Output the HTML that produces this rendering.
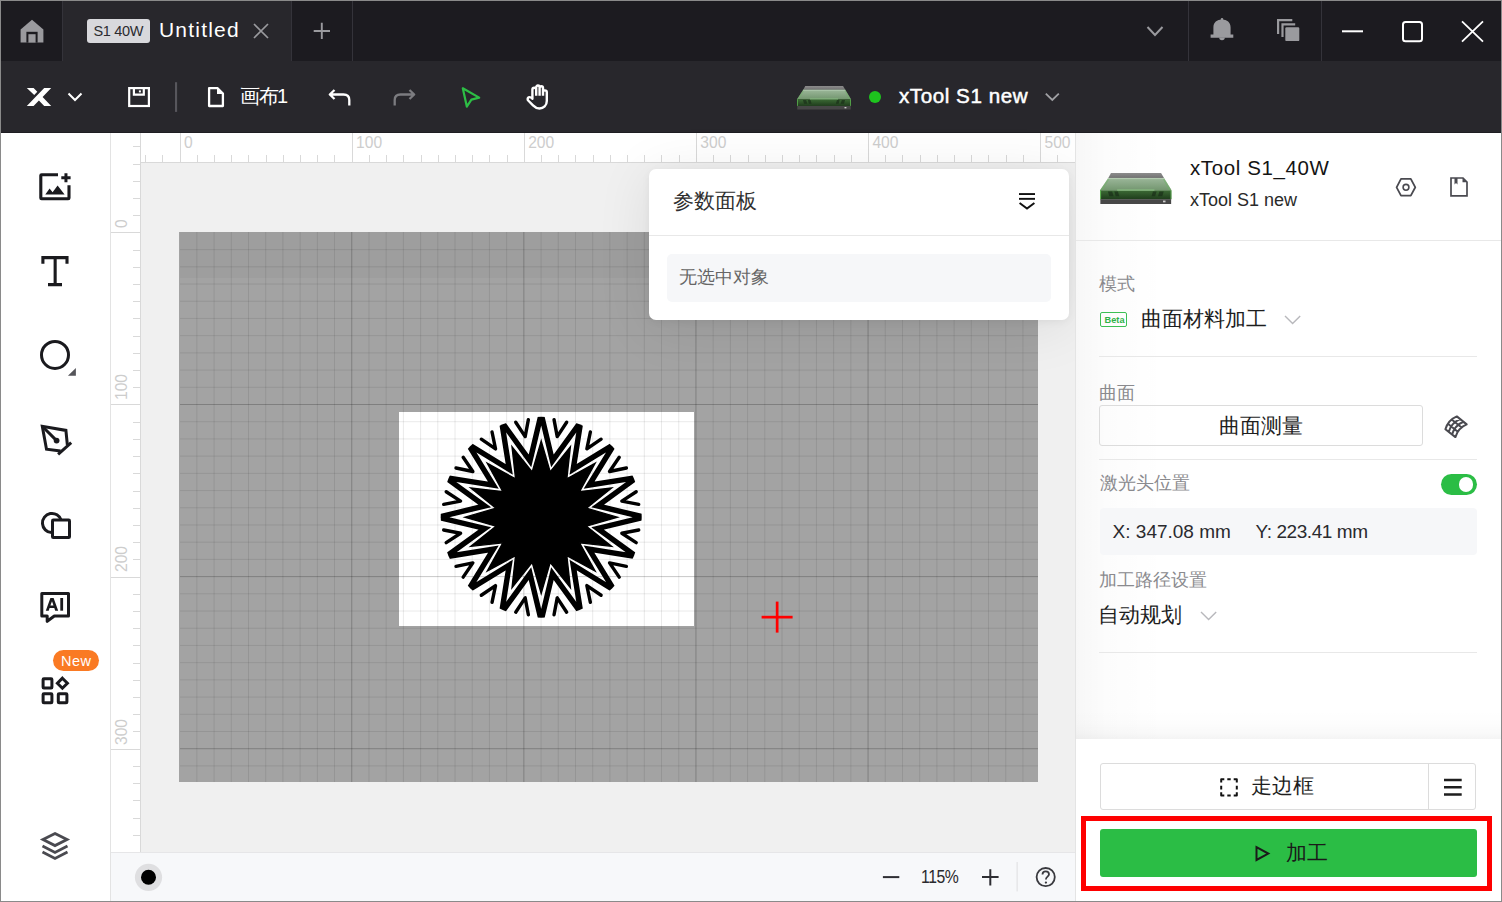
<!DOCTYPE html><html><head><meta charset="utf-8"><style>
*{margin:0;padding:0;box-sizing:border-box}
html,body{width:1502px;height:902px;overflow:hidden;background:#fff;font-family:"Liberation Sans",sans-serif}
.a{position:absolute;white-space:nowrap}
svg.a{overflow:visible}
.wt{color:#fff}
.rl{font-size:15.6px;color:#cdcdcd;line-height:15px}
</style></head><body>
<div class="a" style="left:0;top:0;width:1502px;height:61px;background:#1c1b20"></div>
<div class="a" style="left:63px;top:0;width:229px;height:61px;background:#28272c"></div>
<div class="a" style="left:62px;top:0;width:1px;height:61px;background:#34333a"></div>
<div class="a" style="left:291px;top:0;width:1px;height:61px;background:#34333a"></div>
<div class="a" style="left:352px;top:0;width:1px;height:61px;background:#34333a"></div>
<div class="a" style="left:1188px;top:0;width:1px;height:61px;background:#34333a"></div>
<div class="a" style="left:1321px;top:0;width:1px;height:61px;background:#34333a"></div>
<div class="a" style="left:0;top:61px;width:1502px;height:72px;background:#28272c"></div>
<div class="a" style="left:0;top:132px;width:1502px;height:1px;background:#1e1d22"></div>
<div class="a" style="left:111px;top:133px;width:965px;height:720px;background:#f0f0f0"></div>
<div class="a" style="left:0;top:133px;width:110px;height:769px;background:#fff"></div>
<div class="a" style="left:110px;top:133px;width:1px;height:769px;background:#e3e3e3"></div>
<div class="a" style="left:111px;top:133px;width:965px;height:29px;background:#fff"></div>
<div class="a" style="left:111px;top:133px;width:29px;height:720px;background:#fff"></div>
<svg class="a" style="left:0;top:0" width="1502" height="902" shape-rendering="crispEdges"><rect x="141" y="161.5" width="934" height="1" fill="#d9d9d9"/><rect x="140" y="133" width="1" height="720" fill="#d9d9d9"/><rect x="145" y="155" width="1" height="7" fill="#d9d9d9"/><rect x="162" y="155" width="1" height="7" fill="#d9d9d9"/><rect x="180" y="133" width="1" height="29" fill="#d9d9d9"/><rect x="197" y="155" width="1" height="7" fill="#d9d9d9"/><rect x="214" y="155" width="1" height="7" fill="#d9d9d9"/><rect x="231" y="155" width="1" height="7" fill="#d9d9d9"/><rect x="248" y="155" width="1" height="7" fill="#d9d9d9"/><rect x="266" y="155" width="1" height="7" fill="#d9d9d9"/><rect x="283" y="155" width="1" height="7" fill="#d9d9d9"/><rect x="300" y="155" width="1" height="7" fill="#d9d9d9"/><rect x="317" y="155" width="1" height="7" fill="#d9d9d9"/><rect x="334" y="155" width="1" height="7" fill="#d9d9d9"/><rect x="352" y="133" width="1" height="29" fill="#d9d9d9"/><rect x="369" y="155" width="1" height="7" fill="#d9d9d9"/><rect x="386" y="155" width="1" height="7" fill="#d9d9d9"/><rect x="403" y="155" width="1" height="7" fill="#d9d9d9"/><rect x="421" y="155" width="1" height="7" fill="#d9d9d9"/><rect x="438" y="155" width="1" height="7" fill="#d9d9d9"/><rect x="455" y="155" width="1" height="7" fill="#d9d9d9"/><rect x="472" y="155" width="1" height="7" fill="#d9d9d9"/><rect x="489" y="155" width="1" height="7" fill="#d9d9d9"/><rect x="507" y="155" width="1" height="7" fill="#d9d9d9"/><rect x="524" y="133" width="1" height="29" fill="#d9d9d9"/><rect x="541" y="155" width="1" height="7" fill="#d9d9d9"/><rect x="558" y="155" width="1" height="7" fill="#d9d9d9"/><rect x="575" y="155" width="1" height="7" fill="#d9d9d9"/><rect x="593" y="155" width="1" height="7" fill="#d9d9d9"/><rect x="610" y="155" width="1" height="7" fill="#d9d9d9"/><rect x="627" y="155" width="1" height="7" fill="#d9d9d9"/><rect x="644" y="155" width="1" height="7" fill="#d9d9d9"/><rect x="661" y="155" width="1" height="7" fill="#d9d9d9"/><rect x="679" y="155" width="1" height="7" fill="#d9d9d9"/><rect x="696" y="133" width="1" height="29" fill="#d9d9d9"/><rect x="713" y="155" width="1" height="7" fill="#d9d9d9"/><rect x="730" y="155" width="1" height="7" fill="#d9d9d9"/><rect x="748" y="155" width="1" height="7" fill="#d9d9d9"/><rect x="765" y="155" width="1" height="7" fill="#d9d9d9"/><rect x="782" y="155" width="1" height="7" fill="#d9d9d9"/><rect x="799" y="155" width="1" height="7" fill="#d9d9d9"/><rect x="816" y="155" width="1" height="7" fill="#d9d9d9"/><rect x="834" y="155" width="1" height="7" fill="#d9d9d9"/><rect x="851" y="155" width="1" height="7" fill="#d9d9d9"/><rect x="868" y="133" width="1" height="29" fill="#d9d9d9"/><rect x="885" y="155" width="1" height="7" fill="#d9d9d9"/><rect x="902" y="155" width="1" height="7" fill="#d9d9d9"/><rect x="920" y="155" width="1" height="7" fill="#d9d9d9"/><rect x="937" y="155" width="1" height="7" fill="#d9d9d9"/><rect x="954" y="155" width="1" height="7" fill="#d9d9d9"/><rect x="971" y="155" width="1" height="7" fill="#d9d9d9"/><rect x="988" y="155" width="1" height="7" fill="#d9d9d9"/><rect x="1006" y="155" width="1" height="7" fill="#d9d9d9"/><rect x="1023" y="155" width="1" height="7" fill="#d9d9d9"/><rect x="1040" y="133" width="1" height="29" fill="#d9d9d9"/><rect x="1057" y="155" width="1" height="7" fill="#d9d9d9"/><rect x="133" y="146" width="7" height="1" fill="#d9d9d9"/><rect x="133" y="164" width="7" height="1" fill="#d9d9d9"/><rect x="133" y="181" width="7" height="1" fill="#d9d9d9"/><rect x="133" y="198" width="7" height="1" fill="#d9d9d9"/><rect x="133" y="215" width="7" height="1" fill="#d9d9d9"/><rect x="111" y="232" width="29" height="1" fill="#d9d9d9"/><rect x="133" y="250" width="7" height="1" fill="#d9d9d9"/><rect x="133" y="267" width="7" height="1" fill="#d9d9d9"/><rect x="133" y="284" width="7" height="1" fill="#d9d9d9"/><rect x="133" y="301" width="7" height="1" fill="#d9d9d9"/><rect x="133" y="318" width="7" height="1" fill="#d9d9d9"/><rect x="133" y="336" width="7" height="1" fill="#d9d9d9"/><rect x="133" y="353" width="7" height="1" fill="#d9d9d9"/><rect x="133" y="370" width="7" height="1" fill="#d9d9d9"/><rect x="133" y="387" width="7" height="1" fill="#d9d9d9"/><rect x="111" y="404" width="29" height="1" fill="#d9d9d9"/><rect x="133" y="422" width="7" height="1" fill="#d9d9d9"/><rect x="133" y="439" width="7" height="1" fill="#d9d9d9"/><rect x="133" y="456" width="7" height="1" fill="#d9d9d9"/><rect x="133" y="473" width="7" height="1" fill="#d9d9d9"/><rect x="133" y="491" width="7" height="1" fill="#d9d9d9"/><rect x="133" y="508" width="7" height="1" fill="#d9d9d9"/><rect x="133" y="525" width="7" height="1" fill="#d9d9d9"/><rect x="133" y="542" width="7" height="1" fill="#d9d9d9"/><rect x="133" y="559" width="7" height="1" fill="#d9d9d9"/><rect x="111" y="577" width="29" height="1" fill="#d9d9d9"/><rect x="133" y="594" width="7" height="1" fill="#d9d9d9"/><rect x="133" y="611" width="7" height="1" fill="#d9d9d9"/><rect x="133" y="628" width="7" height="1" fill="#d9d9d9"/><rect x="133" y="645" width="7" height="1" fill="#d9d9d9"/><rect x="133" y="663" width="7" height="1" fill="#d9d9d9"/><rect x="133" y="680" width="7" height="1" fill="#d9d9d9"/><rect x="133" y="697" width="7" height="1" fill="#d9d9d9"/><rect x="133" y="714" width="7" height="1" fill="#d9d9d9"/><rect x="133" y="731" width="7" height="1" fill="#d9d9d9"/><rect x="111" y="749" width="29" height="1" fill="#d9d9d9"/><rect x="133" y="766" width="7" height="1" fill="#d9d9d9"/><rect x="133" y="783" width="7" height="1" fill="#d9d9d9"/><rect x="133" y="800" width="7" height="1" fill="#d9d9d9"/><rect x="133" y="818" width="7" height="1" fill="#d9d9d9"/><rect x="133" y="835" width="7" height="1" fill="#d9d9d9"/><rect x="133" y="852" width="7" height="1" fill="#d9d9d9"/></svg>
<div class="a rl" style="left:184.0px;top:134.6px">0</div>
<div class="a rl" style="left:356.1px;top:134.6px">100</div>
<div class="a rl" style="left:528.2px;top:134.6px">200</div>
<div class="a rl" style="left:700.3px;top:134.6px">300</div>
<div class="a rl" style="left:872.4px;top:134.6px">400</div>
<div class="a rl" style="left:1044.5px;top:134.6px">500</div>
<div class="a rl" style="left:114px;top:228.2px;transform-origin:0 0;transform:rotate(-90deg)">0</div>
<div class="a rl" style="left:114px;top:400.3px;transform-origin:0 0;transform:rotate(-90deg)">100</div>
<div class="a rl" style="left:114px;top:572.4px;transform-origin:0 0;transform:rotate(-90deg)">200</div>
<div class="a rl" style="left:114px;top:744.5px;transform-origin:0 0;transform:rotate(-90deg)">300</div>
<div class="a" style="left:179px;top:232.2px;width:858.6px;height:550px;background:#a3a3a3"></div>
<div class="a" style="left:179.6px;top:232.4px;width:858px;height:46px;background:rgba(0,0,0,0.026)"></div>
<div class="a" style="left:399px;top:412px;width:295px;height:214px;background:#fff"></div>
<svg class="a" style="left:179.6px;top:232.4px" width="858" height="550"><rect x="16.36" y="0" width="1" height="550" fill="rgba(0,0,0,0.086)"/><rect x="33.57" y="0" width="1" height="550" fill="rgba(0,0,0,0.086)"/><rect x="50.78" y="0" width="1" height="550" fill="rgba(0,0,0,0.086)"/><rect x="67.99" y="0" width="1" height="550" fill="rgba(0,0,0,0.086)"/><rect x="85.20" y="0" width="1" height="550" fill="rgba(0,0,0,0.086)"/><rect x="102.41" y="0" width="1" height="550" fill="rgba(0,0,0,0.086)"/><rect x="119.62" y="0" width="1" height="550" fill="rgba(0,0,0,0.086)"/><rect x="136.83" y="0" width="1" height="550" fill="rgba(0,0,0,0.086)"/><rect x="154.04" y="0" width="1" height="550" fill="rgba(0,0,0,0.086)"/><rect x="171.25" y="0" width="1" height="550" fill="rgba(0,0,0,0.22)"/><rect x="188.46" y="0" width="1" height="550" fill="rgba(0,0,0,0.086)"/><rect x="205.67" y="0" width="1" height="550" fill="rgba(0,0,0,0.086)"/><rect x="222.88" y="0" width="1" height="550" fill="rgba(0,0,0,0.086)"/><rect x="240.09" y="0" width="1" height="550" fill="rgba(0,0,0,0.086)"/><rect x="257.30" y="0" width="1" height="550" fill="rgba(0,0,0,0.086)"/><rect x="274.51" y="0" width="1" height="550" fill="rgba(0,0,0,0.086)"/><rect x="291.72" y="0" width="1" height="550" fill="rgba(0,0,0,0.086)"/><rect x="308.93" y="0" width="1" height="550" fill="rgba(0,0,0,0.086)"/><rect x="326.14" y="0" width="1" height="550" fill="rgba(0,0,0,0.086)"/><rect x="343.35" y="0" width="1" height="550" fill="rgba(0,0,0,0.22)"/><rect x="360.56" y="0" width="1" height="550" fill="rgba(0,0,0,0.086)"/><rect x="377.77" y="0" width="1" height="550" fill="rgba(0,0,0,0.086)"/><rect x="394.98" y="0" width="1" height="550" fill="rgba(0,0,0,0.086)"/><rect x="412.19" y="0" width="1" height="550" fill="rgba(0,0,0,0.086)"/><rect x="429.40" y="0" width="1" height="550" fill="rgba(0,0,0,0.086)"/><rect x="446.61" y="0" width="1" height="550" fill="rgba(0,0,0,0.086)"/><rect x="463.82" y="0" width="1" height="550" fill="rgba(0,0,0,0.086)"/><rect x="481.03" y="0" width="1" height="550" fill="rgba(0,0,0,0.086)"/><rect x="498.24" y="0" width="1" height="550" fill="rgba(0,0,0,0.086)"/><rect x="515.45" y="0" width="1" height="550" fill="rgba(0,0,0,0.22)"/><rect x="532.66" y="0" width="1" height="550" fill="rgba(0,0,0,0.086)"/><rect x="549.87" y="0" width="1" height="550" fill="rgba(0,0,0,0.086)"/><rect x="567.08" y="0" width="1" height="550" fill="rgba(0,0,0,0.086)"/><rect x="584.29" y="0" width="1" height="550" fill="rgba(0,0,0,0.086)"/><rect x="601.50" y="0" width="1" height="550" fill="rgba(0,0,0,0.086)"/><rect x="618.71" y="0" width="1" height="550" fill="rgba(0,0,0,0.086)"/><rect x="635.92" y="0" width="1" height="550" fill="rgba(0,0,0,0.086)"/><rect x="653.13" y="0" width="1" height="550" fill="rgba(0,0,0,0.086)"/><rect x="670.34" y="0" width="1" height="550" fill="rgba(0,0,0,0.086)"/><rect x="687.55" y="0" width="1" height="550" fill="rgba(0,0,0,0.22)"/><rect x="704.76" y="0" width="1" height="550" fill="rgba(0,0,0,0.086)"/><rect x="721.97" y="0" width="1" height="550" fill="rgba(0,0,0,0.086)"/><rect x="739.18" y="0" width="1" height="550" fill="rgba(0,0,0,0.086)"/><rect x="756.39" y="0" width="1" height="550" fill="rgba(0,0,0,0.086)"/><rect x="773.60" y="0" width="1" height="550" fill="rgba(0,0,0,0.086)"/><rect x="790.81" y="0" width="1" height="550" fill="rgba(0,0,0,0.086)"/><rect x="808.02" y="0" width="1" height="550" fill="rgba(0,0,0,0.086)"/><rect x="825.23" y="0" width="1" height="550" fill="rgba(0,0,0,0.086)"/><rect x="842.44" y="0" width="1" height="550" fill="rgba(0,0,0,0.086)"/><rect x="0" y="17.11" width="858" height="1" fill="rgba(0,0,0,0.086)"/><rect x="0" y="34.32" width="858" height="1" fill="rgba(0,0,0,0.086)"/><rect x="0" y="51.53" width="858" height="1" fill="rgba(0,0,0,0.086)"/><rect x="0" y="68.74" width="858" height="1" fill="rgba(0,0,0,0.086)"/><rect x="0" y="85.95" width="858" height="1" fill="rgba(0,0,0,0.086)"/><rect x="0" y="103.16" width="858" height="1" fill="rgba(0,0,0,0.086)"/><rect x="0" y="120.37" width="858" height="1" fill="rgba(0,0,0,0.086)"/><rect x="0" y="137.58" width="858" height="1" fill="rgba(0,0,0,0.086)"/><rect x="0" y="154.79" width="858" height="1" fill="rgba(0,0,0,0.086)"/><rect x="0" y="172.00" width="858" height="1" fill="rgba(0,0,0,0.22)"/><rect x="0" y="189.21" width="858" height="1" fill="rgba(0,0,0,0.086)"/><rect x="0" y="206.42" width="858" height="1" fill="rgba(0,0,0,0.086)"/><rect x="0" y="223.63" width="858" height="1" fill="rgba(0,0,0,0.086)"/><rect x="0" y="240.84" width="858" height="1" fill="rgba(0,0,0,0.086)"/><rect x="0" y="258.05" width="858" height="1" fill="rgba(0,0,0,0.086)"/><rect x="0" y="275.26" width="858" height="1" fill="rgba(0,0,0,0.086)"/><rect x="0" y="292.47" width="858" height="1" fill="rgba(0,0,0,0.086)"/><rect x="0" y="309.68" width="858" height="1" fill="rgba(0,0,0,0.086)"/><rect x="0" y="326.89" width="858" height="1" fill="rgba(0,0,0,0.086)"/><rect x="0" y="344.10" width="858" height="1" fill="rgba(0,0,0,0.22)"/><rect x="0" y="361.31" width="858" height="1" fill="rgba(0,0,0,0.086)"/><rect x="0" y="378.52" width="858" height="1" fill="rgba(0,0,0,0.086)"/><rect x="0" y="395.73" width="858" height="1" fill="rgba(0,0,0,0.086)"/><rect x="0" y="412.94" width="858" height="1" fill="rgba(0,0,0,0.086)"/><rect x="0" y="430.15" width="858" height="1" fill="rgba(0,0,0,0.086)"/><rect x="0" y="447.36" width="858" height="1" fill="rgba(0,0,0,0.086)"/><rect x="0" y="464.57" width="858" height="1" fill="rgba(0,0,0,0.086)"/><rect x="0" y="481.78" width="858" height="1" fill="rgba(0,0,0,0.086)"/><rect x="0" y="498.99" width="858" height="1" fill="rgba(0,0,0,0.086)"/><rect x="0" y="516.20" width="858" height="1" fill="rgba(0,0,0,0.22)"/><rect x="0" y="533.41" width="858" height="1" fill="rgba(0,0,0,0.086)"/></svg>
<svg class="a" style="left:0;top:0" width="1502" height="902"><defs><clipPath id="sclip"><circle cx="541.2" cy="517.2" r="100.5"/></clipPath></defs><polygon points="541.20,413.90 552.42,460.80 580.73,421.76 573.15,469.39 614.24,444.16 589.01,485.25 636.64,477.67 597.60,505.98 644.50,517.20 597.60,528.42 636.64,556.73 589.01,549.15 614.24,590.24 573.15,565.01 580.73,612.64 552.42,573.60 541.20,620.50 529.98,573.60 501.67,612.64 509.25,565.01 468.16,590.24 493.39,549.15 445.76,556.73 484.80,528.42 437.90,517.20 484.80,505.98 445.76,477.67 493.39,485.25 468.16,444.16 509.25,469.39 501.67,421.76 529.98,460.80" fill="none" stroke="#000" stroke-width="5.4" stroke-linejoin="miter" stroke-miterlimit="10" clip-path="url(#sclip)"/><polygon points="541.20,441.00 550.19,471.99 570.36,446.80 566.81,478.87 595.08,463.32 579.53,491.59 611.60,488.04 586.41,508.21 617.40,517.20 586.41,526.19 611.60,546.36 579.53,542.81 595.08,571.08 566.81,555.53 570.36,587.60 550.19,562.41 541.20,593.40 532.21,562.41 512.04,587.60 515.59,555.53 487.32,571.08 502.87,542.81 470.80,546.36 495.99,526.19 465.00,517.20 495.99,508.21 470.80,488.04 502.87,491.59 487.32,463.32 515.59,478.87 512.04,446.80 532.21,471.99" fill="#000" stroke="#000" stroke-width="1.4" stroke-miterlimit="20"/><polyline points="554.03,419.68 557.24,436.58 566.67,422.20" fill="none" stroke="#000" stroke-width="3.4" stroke-linejoin="round" stroke-linecap="round"/><polyline points="590.37,432.01 586.87,448.85 601.09,439.17" fill="none" stroke="#000" stroke-width="3.4" stroke-linejoin="round" stroke-linecap="round"/><polyline points="619.23,457.31 609.55,471.53 626.39,468.03" fill="none" stroke="#000" stroke-width="3.4" stroke-linejoin="round" stroke-linecap="round"/><polyline points="636.20,491.73 621.82,501.16 638.72,504.37" fill="none" stroke="#000" stroke-width="3.4" stroke-linejoin="round" stroke-linecap="round"/><polyline points="638.72,530.03 621.82,533.24 636.20,542.67" fill="none" stroke="#000" stroke-width="3.4" stroke-linejoin="round" stroke-linecap="round"/><polyline points="626.39,566.37 609.55,562.87 619.23,577.09" fill="none" stroke="#000" stroke-width="3.4" stroke-linejoin="round" stroke-linecap="round"/><polyline points="601.09,595.23 586.87,585.55 590.37,602.39" fill="none" stroke="#000" stroke-width="3.4" stroke-linejoin="round" stroke-linecap="round"/><polyline points="566.67,612.20 557.24,597.82 554.03,614.72" fill="none" stroke="#000" stroke-width="3.4" stroke-linejoin="round" stroke-linecap="round"/><polyline points="528.37,614.72 525.16,597.82 515.73,612.20" fill="none" stroke="#000" stroke-width="3.4" stroke-linejoin="round" stroke-linecap="round"/><polyline points="492.03,602.39 495.53,585.55 481.31,595.23" fill="none" stroke="#000" stroke-width="3.4" stroke-linejoin="round" stroke-linecap="round"/><polyline points="463.17,577.09 472.85,562.87 456.01,566.37" fill="none" stroke="#000" stroke-width="3.4" stroke-linejoin="round" stroke-linecap="round"/><polyline points="446.20,542.67 460.58,533.24 443.68,530.03" fill="none" stroke="#000" stroke-width="3.4" stroke-linejoin="round" stroke-linecap="round"/><polyline points="443.68,504.37 460.58,501.16 446.20,491.73" fill="none" stroke="#000" stroke-width="3.4" stroke-linejoin="round" stroke-linecap="round"/><polyline points="456.01,468.03 472.85,471.53 463.17,457.31" fill="none" stroke="#000" stroke-width="3.4" stroke-linejoin="round" stroke-linecap="round"/><polyline points="481.31,439.17 495.53,448.85 492.03,432.01" fill="none" stroke="#000" stroke-width="3.4" stroke-linejoin="round" stroke-linecap="round"/><polyline points="515.73,422.20 525.16,436.58 528.37,419.68" fill="none" stroke="#000" stroke-width="3.4" stroke-linejoin="round" stroke-linecap="round"/><rect x="761.6" y="615.8" width="31" height="2.7" fill="#f00"/><rect x="775.8" y="601.6" width="2.7" height="31" fill="#f00"/></svg>
<div class="a" style="left:649px;top:169px;width:420px;height:151px;background:#fff;border-radius:7px;box-shadow:0 2px 8px rgba(0,0,0,0.05),0 6px 56px rgba(0,0,0,0.09)"></div>
<div class="a" style="left:673px;top:188.5px;font-size:20.8px;line-height:24px;color:#303030">参数面板</div>
<svg class="a" style="left:1016px;top:192px" width="22" height="20"><rect x="3" y="1.1" width="16" height="1.9" fill="#111"/><rect x="3" y="5.9" width="16" height="1.9" fill="#111"/><polyline points="3.6,11 11,16.6 18.4,11" fill="none" stroke="#111" stroke-width="2"/></svg>
<div class="a" style="left:649px;top:235px;width:420px;height:1px;background:#e8e8e8"></div>
<div class="a" style="left:667px;top:254px;width:383.5px;height:47.8px;background:#f6f7f9;border-radius:5px"></div>
<div class="a" style="left:679px;top:266px;font-size:18px;line-height:22px;color:#666">无选中对象</div>
<svg class="a" style="left:0;top:0" width="360" height="61"><path d="M20.6,42.6 V29.5 L32,19.8 L43.4,29.5 V42.6 Z" fill="#9a9a9e"/><rect x="26.4" y="31.8" width="11.2" height="10.8" fill="#1c1b20"/><rect x="28.4" y="34.2" width="7.2" height="8.4" fill="#9a9a9e"/><path d="M254,24 L268,38 M268,24 L254,38" stroke="#9a9a9e" stroke-width="1.7"/><path d="M313.7,31 H330 M321.8,22.8 V39" stroke="#9a9a9e" stroke-width="1.9"/></svg>
<div class="a" style="left:87px;top:19px;width:63px;height:24px;background:#d8d8dc;border-radius:3px"></div>
<div class="a" id="badge" style="left:93.5px;top:21.5px;font-size:14.5px;letter-spacing:-0.35px;line-height:18px;color:#2b2b30">S1 40W</div>
<div class="a wt" id="untitled" style="left:159px;top:18px;font-size:21px;letter-spacing:1.2px;line-height:24px">Untitled</div>
<svg class="a" style="left:1130px;top:0" width="372" height="61"><polyline points="17.5,27 25,35 32.5,27" fill="none" stroke="#9a9a9e" stroke-width="2"/><path d="M83.4,34.6 V27.4 C83.4,22.4 87.0,19.8 92.0,19.6 C97.0,19.8 100.6,22.4 100.6,27.4 V34.6 H103.3 V37.8 H80.6 V34.6 Z" fill="#9a9a9e"/><circle cx="92.0" cy="19.4" r="1.3" fill="#9a9a9e"/><path d="M89.2,37.5 A2.8,2.8 0 0 0 94.8,37.5 Z" fill="#9a9a9e"/><path d="M148.1,34.1 V20.1 H162.3" fill="none" stroke="#9a9a9e" stroke-width="2.2"/><path d="M152.5,36.9 V24.3 H165.2" fill="none" stroke="#9a9a9e" stroke-width="2.2"/><rect x="155.3" y="27.2" width="14" height="13.9" rx="1.2" fill="#9a9a9e"/><rect x="212" y="30.3" width="21" height="2" fill="#fff"/><rect x="273" y="22.1" width="19" height="19.2" rx="2.5" fill="none" stroke="#fff" stroke-width="2"/><path d="M332,21.3 L353,41.7 M353,21.3 L332,41.7" stroke="#fff" stroke-width="1.8"/></svg>
<svg class="a" style="left:0;top:61px" width="600" height="72"><path d="M26.8,44.9 H33.6 L38.9,39.4 L44.2,44.9 H51.2 L42.6,36 L51.2,26.9 H44.2 Z M26.8,26.9 H33.6 L37.3,30.7 L34.2,34 Z" fill="#fff"/><polyline points="68.5,32.5 75,39 81.5,32.5" fill="none" stroke="#fff" stroke-width="2"/><rect x="129.2" y="27.1" width="19.7" height="17.9" fill="none" stroke="#fff" stroke-width="2.2"/><path d="M133.9,27 V33.7 H143.8 V27" fill="none" stroke="#fff" stroke-width="2.2"/><rect x="138.9" y="29.4" width="2" height="2" fill="#fff"/><rect x="175" y="21.2" width="2.1" height="29.7" fill="#57565c"/><path d="M209.1,27.1 H217.4 L222.9,32.6 V45 H209.1 Z" fill="none" stroke="#fff" stroke-width="2.3" stroke-linejoin="round"/><path d="M217,26 V33 H224 Z" fill="#fff"/><path d="M334.5,29 L329.8,33.5 L334.5,38 M330,33.5 H343.5 C347,33.5 349.3,35.5 349.3,39 V44.5" fill="none" stroke="#fff" stroke-width="2.3" stroke-linejoin="round"/><path d="M409.5,29 L414.2,33.5 L409.5,38 M414,33.5 H400.5 C397,33.5 394.7,35.5 394.7,39 V44.5" fill="none" stroke="#7c7c80" stroke-width="2.3" stroke-linejoin="round"/><path d="M462.8,27.2 L479.2,36.6 L471.4,38.6 L466.8,45.6 Z" fill="none" stroke="#2dbe45" stroke-width="2.2" stroke-linejoin="round"/><path d="M 532.4 37.8 V 28.6 A 1.9 1.9 0 0 1 536.2 28.6 V 26.2 A 1.7 1.7 0 0 1 539.6 26.2 V 27 A 1.7 1.7 0 0 1 543 27 V 31.3 A 1.9 1.9 0 0 1 546.8 31.3 V 40 C 546.8 44.5 543.5 47.5 539.5 47.5 C 536.8 47.5 535 46.3 533 44.3 L 528.2 39.5 C 527.3 38.6 527.5 37 528.6 36.4 C 529.8 35.8 531 36.3 532.4 37.8 Z M 536.2 28.6 V 34.8 M 539.6 26.2 V 34.8 M 543 27 V 34.8" fill="none" stroke="#fff" stroke-width="2.4" stroke-linejoin="round" stroke-linecap="butt"/></svg>
<div class="a wt" id="canvas1" style="left:240px;top:84px;font-size:20px;letter-spacing:-1.5px;line-height:24px">画布1</div>
<svg class="a" style="left:0;top:0;width:0;height:0"><defs><linearGradient id="gTop" x1="0" y1="0" x2="0" y2="1"><stop offset="0" stop-color="#8c8c8c"/><stop offset="1" stop-color="#727272"/></linearGradient><linearGradient id="gLid" x1="0" y1="0" x2="0" y2="1"><stop offset="0" stop-color="#9cb79a"/><stop offset="1" stop-color="#73966f"/></linearGradient><linearGradient id="gFr" x1="0" y1="0" x2="0" y2="1"><stop offset="0" stop-color="#3c6a35"/><stop offset="1" stop-color="#1f3d1c"/></linearGradient><symbol id="dev" viewBox="0 0 100 44" preserveAspectRatio="none"><path d="M15.3,0 H85.3 L89.4,7 H11.6 Z" fill="url(#gTop)"/><path d="M11.6,7 H89.4 L100,24.5 H0 Z" fill="url(#gLid)"/><path d="M11.6,7 L0,24.5 H4 L14,7 Z M89.4,7 L100,24.5 H96 L87,7 Z" fill="#6fb266" opacity="0.45"/><rect x="11" y="7" width="78.4" height="1.6" fill="#b3cbb0"/><path d="M0,24.5 H100 V37 H0 Z" fill="url(#gFr)"/><rect x="24" y="23.3" width="52" height="1.6" fill="#8cc084"/><path d="M11,26 H17 L19,33 H13 Z M20,26 H25 L27,33 H22 Z M74,26 H79 L77,33 H72 Z M83,26 H89 L87,33 H81 Z" fill="#1a2e18" opacity="0.7"/><rect x="0" y="24.5" width="1.5" height="12.5" fill="#5cb050"/><rect x="98.5" y="24.5" width="1.5" height="12.5" fill="#5cb050"/><rect x="0.5" y="37" width="99" height="7" fill="#474747"/><rect x="88" y="39" width="3.5" height="2.5" fill="#ccc"/></symbol></defs></svg>
<svg class="a" style="left:797px;top:86px" width="54" height="23.7"><use href="#dev" width="54" height="23.7"/></svg>
<div class="a" style="left:869px;top:91px;width:12px;height:12px;border-radius:6px;background:#1ec41e"></div>
<div class="a wt" id="devname" style="left:899px;top:84px;font-size:20.6px;line-height:24px;-webkit-text-stroke:0.5px #fff;letter-spacing:0.55px">xTool S1 new</div>
<svg class="a" style="left:1040px;top:85px" width="24" height="20"><polyline points="5.8,8.6 12.3,15 18.8,8.6" fill="none" stroke="#a0a0a4" stroke-width="1.8"/></svg>
<svg class="a" style="left:0;top:0" width="110" height="902"><path d="M58,174.8 H41.6 A0.8,0.8 0 0 0 40.8,175.6 V198 A0.8,0.8 0 0 0 41.6,198.8 H68.2 A0.8,0.8 0 0 0 69,198 V185.3" fill="none" stroke="#1a1a1e" stroke-width="3.1"/><path d="M61.3,177.8 H70.6 M65.95,173.3 V182.3" stroke="#1a1a1e" stroke-width="3"/><path d="M45.3,194.5 L49.6,188.6 L52.6,192.2 L57.6,185.6 L64.6,194.5 Z" fill="#1a1a1e"/><path d="M42.9,263.8 V257.6 H67 V263.8 M55.15,257.6 V284.6 M48,284.6 H62" fill="none" stroke="#1a1a1e" stroke-width="3.1"/><circle cx="55" cy="354.9" r="13.5" fill="none" stroke="#1a1a1e" stroke-width="3"/><path d="M67.9,375.8 H75.9 V367.9 Z" fill="#55555a"/><path d="M67.35,444.8 L65.9,430.4 L42.3,426.3 L46.5,449.2 L60.6,450.9" fill="none" stroke="#1a1a1e" stroke-width="3" stroke-linejoin="miter"/><path d="M43.5,427.5 L56.6,440.6" stroke="#1a1a1e" stroke-width="3"/><circle cx="56.6" cy="440.6" r="2.9" fill="#1a1a1e"/><path d="M58.1,454.3 L71.2,442.7" stroke="#1a1a1e" stroke-width="3"/><path d="M51.5,532.6 A9.6,9.6 0 1 1 61.2,520.1" fill="none" stroke="#1a1a1e" stroke-width="3"/><rect x="52.5" y="520.1" width="17" height="17.4" rx="0.8" fill="none" stroke="#1a1a1e" stroke-width="3"/><path d="M41.8,593.6 H68.5 V616 H54.3 L47.2,621.3 V616 H41.8 Z" fill="none" stroke="#1a1a1e" stroke-width="3" stroke-linejoin="round"/><path d="M45.8,610.7 L50.4,598 H53.6 L58.2,610.7 H55.2 L54.3,608 H49.6 L48.7,610.7 Z M50.4,605.6 H53.5 L52,601.2 Z" fill="#1a1a1e" fill-rule="evenodd"/><rect x="60.3" y="598" width="2.8" height="12.7" fill="#1a1a1e"/><rect x="43.1" y="678.7" width="8.8" height="9.4" rx="0.8" fill="none" stroke="#1a1a1e" stroke-width="3"/><rect x="43.1" y="693.8" width="8.8" height="9" rx="0.8" fill="none" stroke="#1a1a1e" stroke-width="3"/><rect x="58.3" y="693.8" width="8.6" height="9" rx="0.8" fill="none" stroke="#1a1a1e" stroke-width="3"/><path d="M62.4,678.2 L67.4,683.2 L62.4,688.2 L57.4,683.2 Z" fill="none" stroke="#1a1a1e" stroke-width="3"/><path d="M55,833.6 L67,839.6 L55,845.6 L43,839.6 Z" fill="none" stroke="#4a4a50" stroke-width="2.8" stroke-linejoin="miter"/><path d="M42.5,846 L55,852.4 L67.5,846 M42.5,852 L55,858.4 L67.5,852" fill="none" stroke="#4a4a50" stroke-width="2.8"/></svg>
<div class="a" style="left:53.3px;top:650.3px;width:45.4px;height:21.2px;border-radius:11px;background:#fa7a23"></div>
<div class="a" id="newtxt" style="left:61px;top:653px;font-size:14.5px;letter-spacing:0.5px;line-height:16px;color:#fff">New</div>
<div class="a" style="left:111px;top:852px;width:964px;height:50px;background:#f7f8fa;border-top:1px solid #e6e6e8"></div>
<svg class="a" style="left:111px;top:852px" width="964" height="50"><circle cx="37.5" cy="25.3" r="13.6" fill="#dfdfe1"/><circle cx="37.5" cy="25.3" r="7.5" fill="#000"/><rect x="771.9" y="24.1" width="16.4" height="2" fill="#2e2e33"/><path d="M871,25.1 H887.6 M879.3,17.3 V33.4" stroke="#2e2e33" stroke-width="2"/><rect x="905.6" y="10" width="1" height="29.4" fill="#dedee0"/><circle cx="934.7" cy="25.1" r="9.1" fill="none" stroke="#3a3a3f" stroke-width="1.8"/><path d="M931.5,22.6 C931.5,20.4 933,19.4 934.7,19.4 C936.5,19.4 938,20.5 938,22.3 C938,24.6 934.9,24.7 934.9,27.4" fill="none" stroke="#3a3a3f" stroke-width="1.8"/><circle cx="934.9" cy="30.6" r="1.15" fill="#3a3a3f"/></svg>
<div class="a" id="zoompct" style="left:920.7px;top:867px;font-size:17.5px;letter-spacing:-0.5px;transform-origin:0 0;transform:scaleX(0.9);line-height:20px;color:#2a2a2e">115%</div>
<div class="a" style="left:1075px;top:133px;width:427px;height:769px;background:#fff;border-left:1px solid #e4e4e4"></div>
<div class="a" style="left:1076px;top:133px;width:90px;height:606px;background:linear-gradient(90deg,rgba(0,0,0,0.03),rgba(0,0,0,0.012) 35%,rgba(0,0,0,0))"></div>
<div class="a" style="left:1076px;top:710px;width:425px;height:29px;background:linear-gradient(rgba(0,0,0,0),rgba(0,0,0,0.008) 45%,rgba(0,0,0,0.025) 80%,rgba(0,0,0,0.045))"></div>
<div class="a" style="left:1076px;top:739px;width:425px;height:162px;background:#fff"></div>
<svg class="a" style="left:1100.3px;top:172.7px" width="71.6" height="31.1"><use href="#dev" width="71.6" height="31.1"/></svg>
<div class="a" id="dev1" style="left:1190px;top:156px;font-size:20.5px;letter-spacing:0.6px;line-height:24px;color:#141414">xTool S1_40W</div>
<div class="a" id="dev2" style="left:1190px;top:190px;font-size:18px;line-height:21px;color:#2a2a2a">xTool S1 new</div>
<svg class="a" style="left:1380px;top:160px" width="110" height="50"><path d="M21,18.8 H30.8 L35.3,27.3 L30.8,35.6 H21 L16.6,27.3 Z" fill="none" stroke="#4a4a50" stroke-width="1.8" stroke-linejoin="round"/><circle cx="26" cy="27.3" r="2.9" fill="none" stroke="#4a4a50" stroke-width="1.6"/><path d="M71,18 H83 L87,22 V35.8 H71 Z" fill="none" stroke="#4a4a50" stroke-width="1.7"/><path d="M74.5,18 V24.5 L76,23 L77.5,24.5 V18 Z M82.5,18 V22.2 H87 Z" fill="#4a4a50"/></svg>
<div class="a" style="left:1076px;top:240px;width:425px;height:1px;background:#e8e8e8"></div>
<div class="a" style="left:1099px;top:274px;font-size:17.5px;line-height:21px;color:#8a8a8e">模式</div>
<div class="a" style="left:1100.3px;top:312px;width:27px;height:15.4px;border:1px solid #3cbf54;border-radius:2px"></div>
<div class="a" style="left:1104.6px;top:314px;font-size:9.2px;line-height:12px;color:#2fb248;font-weight:bold">Beta</div>
<div class="a" style="left:1141px;top:307px;font-size:20.7px;line-height:24px;color:#1e1e1e">曲面材料加工</div>
<svg class="a" style="left:1280px;top:310px" width="26" height="20"><polyline points="5,6 12.6,13.6 20.2,6" fill="none" stroke="#b8b8bc" stroke-width="1.4"/></svg>
<div class="a" style="left:1099px;top:356px;width:378px;height:1px;background:#e8e8e8"></div>
<div class="a" style="left:1099px;top:383px;font-size:17.5px;line-height:21px;color:#8a8a8e">曲面</div>
<div class="a" style="left:1099.3px;top:405px;width:323.5px;height:41.3px;border:1px solid #dcdcdc;border-radius:3px"></div>
<div class="a" style="left:1219px;top:414px;font-size:20.7px;line-height:24px;color:#1e1e1e">曲面测量</div>
<svg class="a" style="left:1440px;top:410px" width="32" height="32"><path d="M5.4,19.2 Q8.1,10.1 16.8,6.4 L26.7,14.4 Q18.05,18.05 15.4,27.1 Z M8.73,21.83 Q11.4,12.75 20.1,9.07 M12.07,24.47 Q14.7,15.4 23.4,11.73 M7.87,13.73 L17.83,21.66 M11.67,9.46 L21.6,17.43" fill="none" stroke="#4a4a50" stroke-width="2" stroke-linejoin="round"/></svg>
<div class="a" style="left:1099px;top:459px;width:378px;height:1px;background:#e8e8e8"></div>
<div class="a" style="left:1099.6px;top:472px;font-size:18px;line-height:22px;color:#8a8a8e">激光头位置</div>
<div class="a" style="left:1441px;top:474px;width:36px;height:20.7px;border-radius:10.4px;background:#2bbd45"></div>
<div class="a" style="left:1459.1px;top:477.3px;width:14.4px;height:14.4px;border-radius:7.2px;background:#fff"></div>
<div class="a" style="left:1100.2px;top:508px;width:376.8px;height:47.4px;background:#f6f7f9;border-radius:4px"></div>
<div class="a" id="xc" style="left:1112.6px;top:521px;font-size:19px;line-height:22px;color:#2a2a2e">X: 347.08 mm</div>
<div class="a" id="yc" style="left:1255.5px;top:521px;font-size:19px;letter-spacing:-0.42px;line-height:22px;color:#2a2a2e">Y: 223.41 mm</div>
<div class="a" style="left:1098.8px;top:569px;font-size:18px;line-height:22px;color:#8a8a8e">加工路径设置</div>
<div class="a" style="left:1097.6px;top:603px;font-size:20.9px;line-height:24px;color:#1e1e1e">自动规划</div>
<svg class="a" style="left:1196px;top:606px" width="26" height="20"><polyline points="5,6 12.6,13.6 20.2,6" fill="none" stroke="#b8b8bc" stroke-width="1.4"/></svg>
<div class="a" style="left:1099px;top:652px;width:378px;height:1px;background:#e8e8e8"></div>
<div class="a" style="left:1100.2px;top:763.3px;width:376.2px;height:47px;border:1px solid #dcdcdc;border-radius:3px"></div>
<div class="a" style="left:1428.3px;top:764px;width:1px;height:46px;background:#dcdcdc"></div>
<svg class="a" style="left:1210px;top:770px" width="280" height="34"><path d="M11.200000000000045,12.499999999999954 V9.299999999999955 H14.300000000000045 M23.699999999999953,9.299999999999955 H26.799999999999955 V12.499999999999954 M26.799999999999955,22.3 V25.5 H23.699999999999953 M14.300000000000045,25.5 H11.200000000000045 V22.3 M17.3,9.299999999999955 H20.7 M17.3,25.5 H20.7 M11.200000000000045,15.7 V19.5 M26.799999999999955,15.7 V19.5" fill="none" stroke="#111" stroke-width="2" stroke-linejoin="round"/><path d="M234,9.9 H251.7 M234,17.2 H251.7 M234,24.6 H251.7" stroke="#1e1e1e" stroke-width="2.5"/></svg>
<div class="a" style="left:1251px;top:774px;font-size:20.9px;line-height:24px;color:#1e1e1e">走边框</div>
<div class="a" style="left:1081px;top:815.7px;width:411px;height:75.6px;border:5.6px solid #fe0000"></div>
<div class="a" style="left:1100.2px;top:828.9px;width:376.8px;height:48.1px;background:#2bbd45;border-radius:3px"></div>
<svg class="a" style="left:1250px;top:840px" width="26" height="26"><path d="M6.5,7.2 L18.3,13.6 L6.5,20 Z" fill="none" stroke="#1a1a1a" stroke-width="2" stroke-linejoin="miter"/></svg>
<div class="a" style="left:1285.5px;top:841px;font-size:20.5px;line-height:24px;color:#1a1a1a">加工</div>
<div class="a" style="left:0;top:0;width:1502px;height:1px;background:#8a8a8a"></div>
<div class="a" style="left:0;top:0;width:1px;height:902px;background:#8a8a8a"></div>
<div class="a" style="left:1501px;top:0;width:1px;height:902px;background:#8a8a8a"></div>
<div class="a" style="left:0;top:901px;width:1502px;height:1px;background:#8a8a8a"></div>
</body></html>
